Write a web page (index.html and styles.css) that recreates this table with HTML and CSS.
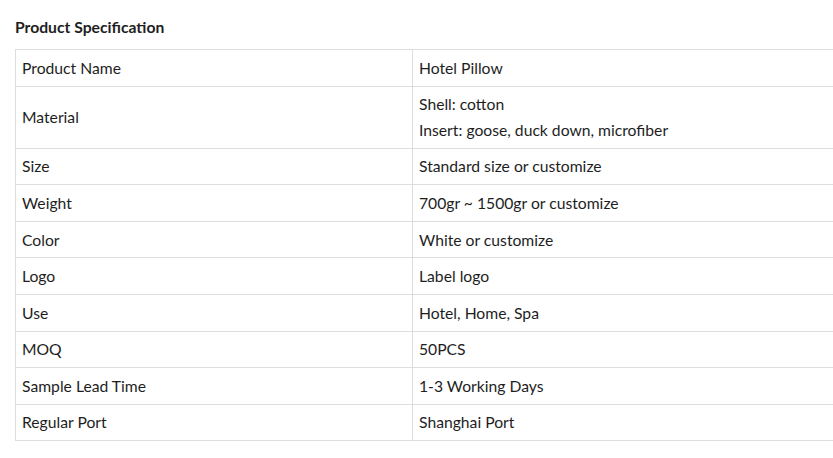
FILE: index.html
```html
<!DOCTYPE html>
<html lang="en">
<head>
<meta charset="UTF-8" />
<meta name="viewport" content="width=device-width, initial-scale=1" />
<title>Hotel Pillow | Product Specification</title>
<link rel="stylesheet" href="styles.css">
</head>
<body>

<section class="spec">
  <h2>Product Specification</h2>
  <div class="spec-wrap">
    <table class="spec-table">
      <tr><td>Product Name</td><td>Hotel Pillow</td></tr>
      <tr><td>Material</td><td>Shell: cotton<br>Insert: goose, duck down, microfiber</td></tr>
      <tr><td>Size</td><td>Standard size or customize</td></tr>
      <tr><td>Weight</td><td>700gr ~ 1500gr or customize</td></tr>
      <tr><td>Color</td><td>White or customize</td></tr>
      <tr><td>Logo</td><td>Label logo</td></tr>
      <tr><td>Use</td><td>Hotel, Home, Spa</td></tr>
      <tr><td>MOQ</td><td>50PCS</td></tr>
      <tr><td>Sample Lead Time</td><td>1-3 Working Days</td></tr>
      <tr><td>Regular Port</td><td>Shanghai Port</td></tr>
    </table>
  </div>
</section>

</body>
</html>
```

FILE: styles.css
```css
/* — page — */
body{margin:0;background:#fff;color:#1e1e1e;font-family:Lato,'Open Sans',sans-serif;overflow:hidden;}

.spec{padding:17px 0 0 15px;}
.spec h2{margin:0 0 12px;font-size:15.7px;font-weight:700;color:#1e1e1e;line-height:20px;}

/* — table — */
.spec-wrap{overflow:hidden;}
.spec-table{border-collapse:collapse;width:1000px;font-size:15.7px;line-height:25.6px;}
.spec-table td{border:1px solid #ddd;padding:5.6px 6px 4.4px;vertical-align:middle;}
.spec-table td:first-child{width:384px;}
```
